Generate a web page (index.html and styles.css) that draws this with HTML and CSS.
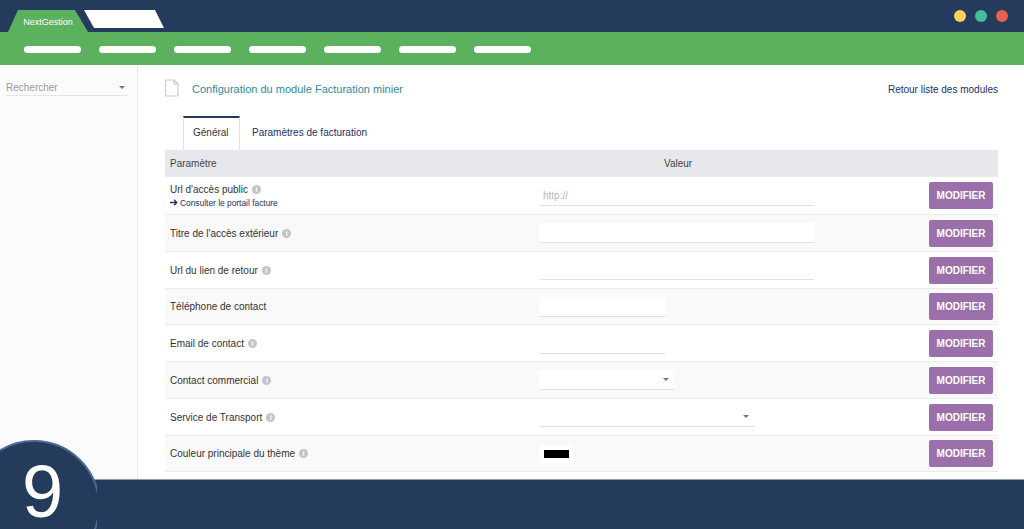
FILE: index.html
```html
<!DOCTYPE html>
<html lang="fr">
<head>
<meta charset="utf-8">
<title>NextGestion</title>
<link rel="stylesheet" href="styles.css">
</head>
<body>
<div class="page">
  <header class="topbar">
    <div class="tabs-top">
      <div class="app-tab">NextGestion</div>
      <div class="blank-tab"></div>
    </div>
    <div class="dots">
      <span class="dot dot-yellow"></span>
      <span class="dot dot-teal"></span>
      <span class="dot dot-red"></span>
    </div>
  </header>
  <nav class="menu">
    <span class="pill"></span><span class="pill"></span><span class="pill"></span><span class="pill"></span><span class="pill"></span><span class="pill"></span><span class="pill"></span>
  </nav>
  <div class="body">
    <aside class="sidebar">
      <div class="search"><span>Rechercher</span><i class="caret"></i></div>
    </aside>
    <main class="content">
      <div class="title-row">
        <div class="title">
          <svg class="doc" width="14" height="18" viewBox="0 0 14 18"><path d="M1.5 1h7.500l4 4v11a1 1 0 0 1-1 1h-10.500a1 1 0 0 1-1-1V2a1 1 0 0 1 1-1z M9 1v4h4" fill="#fff" stroke="#c9c9c9" stroke-width="1.200"/></svg>
          <h1>Configuration du module Facturation minier</h1>
        </div>
        <a class="back">Retour liste des modules</a>
      </div>
      <div class="tabs">
        <div class="tab active">Général</div>
        <div class="tab">Paramètres de facturation</div>
      </div>
      <div class="table">
        <div class="row head"><div>Paramètre</div><div class="val-head">Valeur</div></div>
        <div class="row tall">
          <div>
            <div class="label">Url d'accès public <i class="info">i</i></div>
            <div class="sub"><svg class="arrow" width="8" height="7" viewBox="0 0 8 7"><path d="M0 3.500h6.500M4 .8l2.800 2.700L4 6.200" fill="none" stroke="#1d2f6b" stroke-width="1.300"/></svg>Consulter le portail facture</div>
          </div>
          <div class="field wide ph">http://</div>
          <button class="btn">MODIFIER</button>
        </div>
        <div class="row alt">
          <div class="label">Titre de l'accès extérieur <i class="info">i</i></div>
          <div class="field wide"></div>
          <button class="btn">MODIFIER</button>
        </div>
        <div class="row">
          <div class="label">Url du lien de retour <i class="info">i</i></div>
          <div class="field wide"></div>
          <button class="btn">MODIFIER</button>
        </div>
        <div class="row alt">
          <div class="label">Téléphone de contact</div>
          <div class="field small"></div>
          <button class="btn">MODIFIER</button>
        </div>
        <div class="row">
          <div class="label">Email de contact <i class="info">i</i></div>
          <div class="field small"></div>
          <button class="btn">MODIFIER</button>
        </div>
        <div class="row alt">
          <div class="label">Contact commercial <i class="info">i</i></div>
          <div class="field select sel-small"><i class="caret"></i></div>
          <button class="btn">MODIFIER</button>
        </div>
        <div class="row">
          <div class="label">Service de Transport <i class="info">i</i></div>
          <div class="field select sel-wide"><i class="caret"></i></div>
          <button class="btn">MODIFIER</button>
        </div>
        <div class="row alt">
          <div class="label">Couleur principale du thème <i class="info">i</i></div>
          <div class="swatch-box"><span class="swatch"></span></div>
          <button class="btn">MODIFIER</button>
        </div>
      </div>
    </main>
  </div>
  <footer class="footer"></footer>
  <div class="step"><span class="step-num">9</span></div>
</div>
</body>
</html>
```

FILE: styles.css
```css
* { box-sizing: border-box; }
html, body { margin: 0; height: 100%; overflow: hidden; }
body { font-family: "Liberation Sans", Arial, sans-serif; color: #333; background: #fff; }
.page { position: relative; width: 1024px; height: 529px; display: flex; flex-direction: column; overflow: hidden; }

.topbar { height: 32px; flex: none; background: #253b5c; display: flex; justify-content: space-between; padding: 10px 16px 0 8px; }
.tabs-top { display: flex; }
.app-tab { width: 80px; height: 22px; background: #5cb15f; color: #fff; font-size: 9px; line-height: 25px; text-align: center; clip-path: polygon(10px 0, 67px 0, 80px 100%, 0 100%); }
.blank-tab { width: 80px; height: 18px; margin-left: -4px; background: #fff; clip-path: polygon(0 0, 71px 0, 80px 100%, 10px 100%); }
.dots { display: flex; gap: 9px; }
.dot { width: 12px; height: 12px; border-radius: 50%; }
.dot-yellow { background: #fdd05a; }
.dot-teal { background: #3fc0a1; }
.dot-red { background: #ea5f4d; }

.menu { height: 33px; flex: none; background: #5cb15f; display: flex; gap: 18.1px; padding: 14px 0 0 23.5px; }
.pill { width: 57px; height: 7px; border-radius: 4px; background: #fff; }

.body { flex: 1; min-height: 0; display: flex; overflow: hidden; }
.sidebar { width: 138px; flex: none; background: #fbfbfb; border-right: 1px solid #ececec; padding: 14px 9px 0 6px; }
.search { height: 17px; display: flex; justify-content: space-between; align-items: center; border-bottom: 1px solid #e6e6e6; font-size: 10px; color: #999; padding-right: 3px; }
.caret { display: block; width: 0; height: 0; border: 3px solid transparent; border-top: 3.500px solid #777; border-bottom: 0; }

.content { flex: 1; min-width: 0; padding: 14px 26px 0 27px; }
.title-row { height: 20px; display: flex; justify-content: space-between; align-items: center; }
.title { display: flex; align-items: center; gap: 13px; }
.doc { display: block; margin-top: -2px; }
h1 { margin: 0; font-size: 11px; font-weight: 400; color: #31899b; }
.back { font-size: 10px; color: #1d2f6b; }

.tabs { display: flex; height: 34px; margin: 17px 0 0 18px; }
.tab { padding: 2px 12px 0; font-size: 10px; line-height: 30px; color: #1d2f6b; }
.tab.active { width: 57px; padding: 0 0 0 9px; background: #fff; color: #333; border: 1px solid #e3e3e3; border-top: 2px solid #253b5c; border-bottom: 0; }

.table { font-size: 10px; }
.row { display: grid; grid-template-columns: 369px 1fr auto; align-items: center; height: 36.75px; padding: 1px 5px 0; border-bottom: 1px solid #ececec; background: #fff; }
.row.tall { height: 38px; padding-top: 0; }
.row.alt { background: #f9f9f9; }
.row.head { height: 27px; padding-top: 0; grid-template-columns: 494px 1fr; background: #e7e8ec; border-bottom: 1px solid #ececec; font-size: 10px; color: #444; }
.val-head { color: #444; }
.label { font-size: 10px; color: #333; display: flex; align-items: center; gap: 4px; }
.info { display: inline-block; width: 9px; height: 9px; border-radius: 50%; background: #c4c4c4; color: #fff; font: 700 7px/9px "Liberation Sans", Arial, sans-serif; text-align: center; }
.sub { font-size: 8.400px; color: #1d2f6b; margin-top: 3px; display: flex; align-items: center; gap: 2px; }
.arrow { display: block; }

.field { height: 20px; border-bottom: 1px solid #e2e2e2; border-radius: 2px; }
.alt .field { background: #fff; }
.field.wide { width: 276px; }
.field.small { width: 127px; }
.field.ph { font-size: 10px; line-height: 20px; color: #b8b8b8; padding-left: 4px; }
.field.select { display: flex; justify-content: flex-end; align-items: center; padding-right: 6px; }
.sel-small { width: 136px; }
.sel-wide { width: 216px; }
.swatch-box { width: 35px; height: 18px; background: #fff; border-radius: 2px; display: flex; align-items: center; justify-content: center; }
.swatch { width: 25px; height: 8px; background: #000; }

.btn { width: 64px; height: 27px; padding: 0; border: 0; border-radius: 2px; background: #9b70aa; color: #fff; font: 700 10px "Liberation Sans", Arial, sans-serif; }

.footer { height: 50px; flex: none; background: #253b5c; border-top: 1px solid #8b9bb0; }
.step { position: absolute; left: 0; top: 440px; width: 97px; height: 89px; overflow: hidden; }
.step::before { content: ""; position: absolute; left: -32px; top: 0; width: 128px; height: 128px; border-radius: 50%; background: #253b5c; border: 2px solid #4a6a95; }
.step-num { position: absolute; left: 22px; top: 17px; color: #fff; font-size: 74px; line-height: 70px; }
```
